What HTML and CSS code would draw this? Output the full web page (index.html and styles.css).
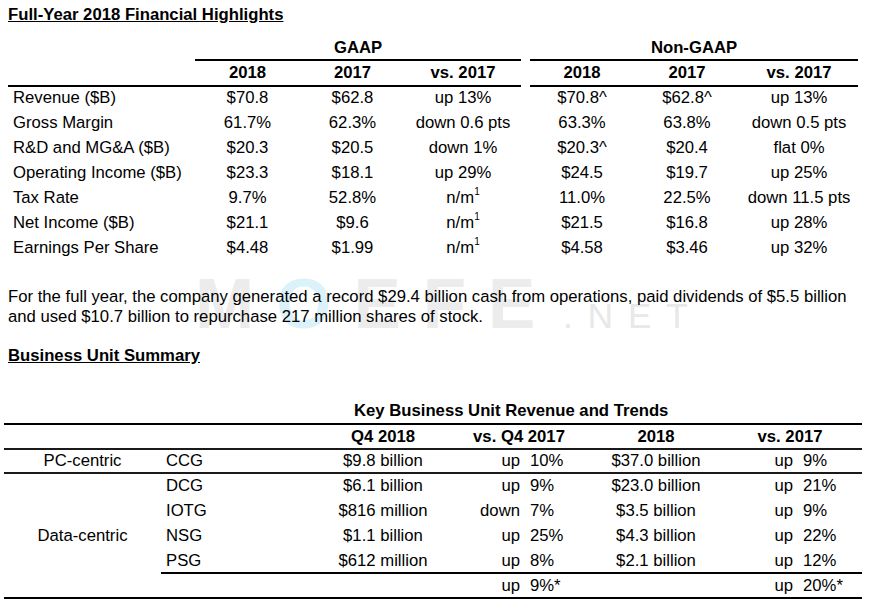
FILE: index.html
```html
<!DOCTYPE html>
<html>
<head>
<meta charset="utf-8">
<link rel="stylesheet" href="styles.css">
</head>
<body>
<div class="watermark" aria-hidden="true"><span class="wm-big">M<span class="wm-o">O</span>EFE</span><span class="wm-net">.NET</span></div>

<h1 class="title">Full-Year 2018 Financial Highlights</h1>

<table class="fin">
  <colgroup>
    <col class="c-label"><col class="c-a"><col class="c-b"><col class="c-c"><col class="c-gap"><col class="c-d"><col class="c-e"><col class="c-f">
  </colgroup>
  <tr class="group-row">
    <td></td>
    <td colspan="3" class="ruled">GAAP</td>
    <td></td>
    <td colspan="3" class="ruled">Non-GAAP</td>
  </tr>
  <tr class="head-row">
    <td class="ruled"></td>
    <td class="ruled">2018</td><td class="ruled">2017</td><td class="ruled">vs. 2017</td>
    <td></td>
    <td class="ruled">2018</td><td class="ruled">2017</td><td class="ruled">vs. 2017</td>
  </tr>
  <tr class="body-row"><td class="lbl">Revenue ($B)</td><td>$70.8</td><td>$62.8</td><td>up 13%</td><td></td><td>$70.8^</td><td>$62.8^</td><td>up 13%</td></tr>
  <tr class="body-row"><td class="lbl">Gross Margin</td><td>61.7%</td><td>62.3%</td><td>down 0.6 pts</td><td></td><td>63.3%</td><td>63.8%</td><td>down 0.5 pts</td></tr>
  <tr class="body-row"><td class="lbl">R&amp;D and MG&amp;A ($B)</td><td>$20.3</td><td>$20.5</td><td>down 1%</td><td></td><td>$20.3^</td><td>$20.4</td><td>flat 0%</td></tr>
  <tr class="body-row"><td class="lbl">Operating Income ($B)</td><td>$23.3</td><td>$18.1</td><td>up 29%</td><td></td><td>$24.5</td><td>$19.7</td><td>up 25%</td></tr>
  <tr class="body-row"><td class="lbl">Tax Rate</td><td>9.7%</td><td>52.8%</td><td>n/m<span class="sup">1</span></td><td></td><td>11.0%</td><td>22.5%</td><td>down 11.5 pts</td></tr>
  <tr class="body-row"><td class="lbl">Net Income ($B)</td><td>$21.1</td><td>$9.6</td><td>n/m<span class="sup">1</span></td><td></td><td>$21.5</td><td>$16.8</td><td>up 28%</td></tr>
  <tr class="body-row"><td class="lbl">Earnings Per Share</td><td>$4.48</td><td>$1.99</td><td>n/m<span class="sup">1</span></td><td></td><td>$4.58</td><td>$3.46</td><td>up 32%</td></tr>
</table>

<p class="para">For the full year, the company generated a record $29.4 billion cash from operations, paid dividends of $5.5 billion and used $10.7 billion to repurchase 217 million shares of stock.</p>

<h2 class="subtitle">Business Unit Summary</h2>

<div class="caption">Key Business Unit Revenue and Trends</div>
<table class="bu">
  <colgroup>
    <col class="b-a"><col class="b-b"><col class="b-c"><col class="b-d1"><col class="b-d2"><col class="b-e"><col class="b-f1"><col class="b-f2">
  </colgroup>
  <tr class="bu-head">
    <td></td><td></td><td>Q4 2018</td><td colspan="2">vs. Q4 2017</td><td>2018</td><td colspan="2" class="hd-vs">vs. 2017</td>
  </tr>
  <tr class="bu-pc">
    <td class="seg">PC-centric</td><td class="unit">CCG</td><td class="ctr">$9.8 billion</td><td class="dir">up</td><td class="pct">10%</td><td class="ctr">$37.0 billion</td><td class="dir">up</td><td class="pct">9%</td>
  </tr>
  <tr class="bu-row">
    <td class="seg seg-data" rowspan="5">Data-centric</td><td class="unit">DCG</td><td class="ctr">$6.1 billion</td><td class="dir">up</td><td class="pct">9%</td><td class="ctr">$23.0 billion</td><td class="dir">up</td><td class="pct">21%</td>
  </tr>
  <tr class="bu-row">
    <td class="unit">IOTG</td><td class="ctr">$816 million</td><td class="dir">down</td><td class="pct">7%</td><td class="ctr">$3.5 billion</td><td class="dir">up</td><td class="pct">9%</td>
  </tr>
  <tr class="bu-row">
    <td class="unit">NSG</td><td class="ctr">$1.1 billion</td><td class="dir">up</td><td class="pct">25%</td><td class="ctr">$4.3 billion</td><td class="dir">up</td><td class="pct">22%</td>
  </tr>
  <tr class="bu-last">
    <td class="unit">PSG</td><td class="ctr">$612 million</td><td class="dir">up</td><td class="pct">8%</td><td class="ctr">$2.1 billion</td><td class="dir">up</td><td class="pct">12%</td>
  </tr>
  <tr class="bu-total">
    <td></td><td></td><td class="dir">up</td><td class="pct">9%*</td><td></td><td class="dir">up</td><td class="pct">20%*</td>
  </tr>
</table>
</body>
</html>
```

FILE: styles.css
```css
html, body {
  background: #ffffff;
}
body {
  margin: 0;
  padding: 0 8px;
  position: relative;
  font-family: "Liberation Sans", Arial, sans-serif;
  font-size: 16.7px;
  color: #000;
}

.watermark {
  position: absolute;
  left: 0;
  top: 0;
  width: 100%;
  height: 0;
  z-index: 0;
  pointer-events: none;
}
.wm-big {
  position: absolute;
  left: 195px;
  top: 268px;
  font-size: 71px;
  line-height: 71px;
  font-weight: bold;
  letter-spacing: 22px;
  color: #ececec;
  white-space: nowrap;
}
.wm-o {
  color: #dcf2fb;
}
.wm-net {
  position: absolute;
  left: 563px;
  top: 298px;
  font-size: 35px;
  line-height: 35px;
  letter-spacing: 15px;
  color: #e8e8e8;
  white-space: nowrap;
}

.title, .subtitle, .para, .caption, .fin, .bu {
  position: relative;
  z-index: 1;
}

.title {
  margin: 5px 0 0;
  font-size: 16.7px;
  line-height: 20px;
  font-weight: bold;
  text-decoration: underline;
}

.fin {
  margin-top: 11px;
  border-collapse: separate;
  border-spacing: 0;
  table-layout: fixed;
  width: 850px;
}
.c-label { width: 187px; }
.c-a { width: 105px; }
.c-b { width: 105px; }
.c-c { width: 116px; }
.c-gap { width: 9px; }
.c-d { width: 104px; }
.c-e { width: 106px; }
.c-f { width: 118px; }

.fin td {
  padding: 0;
  text-align: center;
  white-space: nowrap;
  vertical-align: top;
}
.fin .ruled {
  border-bottom: 2px solid #000;
}
.group-row td {
  font-weight: bold;
  line-height: 23px;
}
.group-row td:not(.ruled) {
  border-bottom: 2px solid transparent;
}
.head-row td {
  font-weight: bold;
  line-height: 24px;
}
.head-row td:not(.ruled) {
  border-bottom: 2px solid transparent;
}
.body-row td {
  line-height: 20px;
  padding-top: 1px;
  padding-bottom: 4px;
}
.fin td.lbl {
  text-align: left;
  padding-left: 5px;
}
.sup {
  font-size: 10px;
  line-height: 0;
  vertical-align: 8px;
}

.para {
  margin: 25px 0 0;
  line-height: 20px;
  width: 850px;
}

.subtitle {
  margin: 19px 0 0;
  font-size: 16.7px;
  line-height: 20px;
  font-weight: bold;
  text-decoration: underline;
}

.caption {
  margin: 35px 0 0;
  padding-left: 346px;
  line-height: 20px;
  font-weight: bold;
}

.bu {
  margin: 2px 0 0 -4px;
  border-collapse: separate;
  border-spacing: 0;
  table-layout: fixed;
  width: 858px;
  border-top: 2px solid #000;
}
.b-a { width: 157px; }
.b-b { width: 139px; }
.b-c { width: 166px; }
.b-d1 { width: 59px; }
.b-d2 { width: 47px; }
.b-e { width: 168px; }
.b-f1 { width: 58px; }
.b-f2 { width: 64px; }

.bu td {
  padding: 0;
  white-space: nowrap;
  vertical-align: top;
}
.bu-head td {
  font-weight: bold;
  text-align: center;
  line-height: 23px;
  border-bottom: 2px solid #1a1a1a;
}
.bu-head td.hd-vs {
  padding-right: 22px;
}
.bu-pc td {
  line-height: 22px;
  border-bottom: 2px solid #1a1a1a;
}
.bu-row td {
  line-height: 22px;
  padding-top: 1px;
  padding-bottom: 2px;
}
.bu-last td {
  line-height: 22px;
  padding-top: 1px;
  border-bottom: 2px solid #000;
}
.bu-total td {
  line-height: 22px;
  padding-top: 1px;
  border-bottom: 2px solid #000;
}
.bu td.seg {
  text-align: center;
  vertical-align: middle;
}
.bu td.seg-data {
  padding-top: 0;
  padding-bottom: 0;
  border-bottom: 2px solid #000;
}
.bu td.unit {
  text-align: left;
  padding-left: 5px;
}
.bu td.ctr {
  text-align: center;
}
.bu td.dir {
  text-align: right;
  padding-right: 5px;
}
.bu td.pct {
  text-align: left;
  padding-left: 5px;
}
```
